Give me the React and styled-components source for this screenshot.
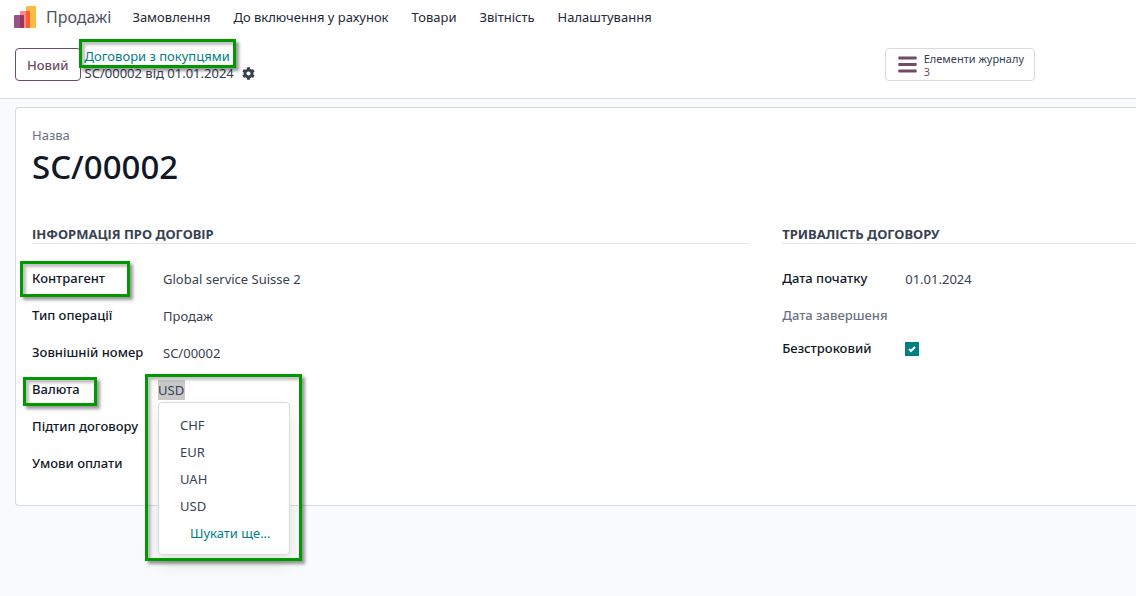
import React from 'react';
import styled, { createGlobalStyle } from 'styled-components';
import { FaBars, FaCog } from 'react-icons/fa';

const GlobalStyle = createGlobalStyle`
*{
box-sizing:border-box;
}
body{
margin:0;
background:#f9fafb;
color:#374151;
font-family:"Noto Sans", "Open Sans", sans-serif;
font-size:13px;
line-height:20px;
}
button, input{
font:inherit;
color:inherit;
}
`;

const Page = styled.div`
min-height:100vh;
overflow-x:hidden;
`;

const NavBar = styled.nav`
display:flex;
align-items:center;
height:34px;
padding-left:14px;
background:#fff;
`;

const AppName = styled.a`
display:flex;
align-items:center;
gap:10px;
margin-right:21px;
color:#4b5563;
font-size:16px;
text-decoration:none;
`;

const Menu = styled.div`
display:flex;
gap:23px;
`;

const MenuLink = styled.a`
color:#1f2937;
text-decoration:none;
white-space:nowrap;
`;

const ControlPanel = styled.header`
display:flex;
align-items:center;
justify-content:space-between;
height:65px;
padding:0 101px 3px 15px;
background:#fff;
border-bottom:1px solid #d8dadd;
`;

const PanelLeft = styled.div`
display:flex;
align-items:center;
gap:4px;
`;

const NewButton = styled.button`
height:33px;
padding:0 11px;
background:#fff;
border:1px solid #714b67;
border-radius:4px;
color:#714b67;
font-size:13px;
font-weight:500;
`;

const Breadcrumbs = styled.div`
display:flex;
flex-direction:column;
align-items:flex-start;
line-height:17px;
`;

const CrumbLink = styled.a`
position:relative;
color:#017e84;
text-decoration:none;
`;

const CurrentCrumb = styled.div`
display:flex;
align-items:center;
gap:8px;
`;

const IconButton = styled.button`
display:flex;
padding:0;
border:0;
background:none;
`;

const StatButton = styled.button`
display:flex;
align-items:center;
gap:6px;
height:33px;
padding:0 10px 0 11px;
background:#fff;
border:1px solid #d8dadd;
border-radius:4px;
font-size:11px;
line-height:13px;
text-align:left;
`;

const StatValue = styled.div`
color:#714b67;
`;

const Sheet = styled.main`
margin:8px 0 0 15px;
padding:17px 0 23px 16px;
background:#fff;
border:1px solid #d8dadd;
border-right:0;
border-radius:4px 0 0 4px;
`;

const NameLabel = styled.div`
color:#6b7280;
`;

const RecordName = styled.h1`
margin:0;
color:#111827;
font-size:33px;
font-weight:500;
line-height:44px;
`;

const Groups = styled.div`
display:grid;
grid-template-columns:67fr 33fr;
gap:32px;
margin-top:37px;
`;

const GroupTitle = styled.h2`
margin:0 0 16px;
border-bottom:1px solid #e5e7eb;
color:#374151;
font-size:13px;
font-weight:700;
line-height:17px;
text-transform:uppercase;
`;

const Field = styled.div`
display:grid;
grid-template-columns:${props => props.$labelWidth} 1fr;
align-items:center;
min-height:${props => (props.$compact ? '29px' : '37px')};
`;

const FieldLabel = styled.label`
position:relative;
justify-self:start;
padding-bottom:2px;
color:${props => (props.$muted ? '#6b7280' : '#111827')};
font-weight:500;
white-space:nowrap;
`;

const Many2One = styled.div`
position:relative;
margin-left:-5px;
`;

const CurrencyInput = styled.input`
display:block;
width:27px;
height:20px;
padding:0;
border:0;
outline:0;
background:#c8c8c8;
`;

const Dropdown = styled.ul`
position:absolute;
top:22px;
left:0;
width:132px;
margin:0;
padding:9px 0 7px;
list-style:none;
background:#fff;
border:1px solid #d8dadd;
border-radius:4px;
box-shadow:0 8px 16px rgb(0, 0, 0, 0.1);
`;

const Option = styled.li`
padding:0 21px;
line-height:27px;
`;

const MoreLink = styled.a`
padding-left:10px;
color:#017e84;
text-decoration:none;
white-space:nowrap;
`;

const Checkbox = styled.input`
display:block;
appearance:none;
width:14px;
height:14px;
margin:0;
background:#017e84 url("data:image/svg+xml,%3Csvg xmlns='http://www.w3.org/2000/svg' viewBox='0 0 14 14'%3E%3Cpath d='M4 7l2 2 4-4' fill='none' stroke='white' stroke-width='2'/%3E%3C/svg%3E");
`;

// green frame drawn over a part of the form
const Highlight = styled.span`
position:absolute;
inset:${props => props.$inset};
border:3px solid #009a00;
box-shadow:3px 3px 3px rgb(0, 0, 0, 0.4), inset 3px 3px 3px rgb(0, 0, 0, 0.25);
pointer-events:none;
`;

const menuItems = ['Замовлення', 'До включення у рахунок', 'Товари', 'Звітність', 'Налаштування'];
const currencies = ['CHF', 'EUR', 'UAH', 'USD'];

function SalesLogo() {
    return (
        <svg width="22" height="22" viewBox="0 0 22 22" aria-hidden="true">
            <rect x="12" width="10" height="22" rx="1" fill="#fbb945"/>
            <rect x="6" y="5" width="10" height="17" rx="1" fill="#fc868b"/>
            <rect y="9" width="10" height="13" rx="1" fill="#985184"/>
            <path d="M12 5h3a1 1 0 0 1 1 1v15a1 1 0 0 1-1 1h-3z" fill="#f86126"/>
            <path d="M6 9h3a1 1 0 0 1 1 1v11a1 1 0 0 1-1 1H6z" fill="#953653"/>
        </svg>
    );
}

function App() {
    return (
        <Page>
            <GlobalStyle/>
            <NavBar>
                <AppName href="#">
                    <SalesLogo/>
                    Продажі
                </AppName>
                <Menu>
                    {menuItems.map(item => <MenuLink href="#" key={item}>{item}</MenuLink>)}
                </Menu>
            </NavBar>
            <ControlPanel>
                <PanelLeft>
                    <NewButton>Новий</NewButton>
                    <Breadcrumbs>
                        <CrumbLink href="#">
                            Договори з покупцями
                            <Highlight $inset="-9px -6px -3px -6px"/>
                        </CrumbLink>
                        <CurrentCrumb>
                            SC/00002 від 01.01.2024
                            <IconButton aria-label="Дії"><FaCog size={13}/></IconButton>
                        </CurrentCrumb>
                    </Breadcrumbs>
                </PanelLeft>
                <StatButton>
                    <FaBars size={21} color="#714b67"/>
                    <div>
                        Елементи журналу
                        <StatValue>3</StatValue>
                    </div>
                </StatButton>
            </ControlPanel>
            <Sheet>
                <NameLabel>Назва</NameLabel>
                <RecordName>SC/00002</RecordName>
                <Groups>
                    <section>
                        <GroupTitle>Інформація про договір</GroupTitle>
                        <Field $labelWidth="131px">
                            <FieldLabel as="span">
                                Контрагент
                                <Highlight $inset="-7px -25px -7px -12px"/>
                            </FieldLabel>
                            <span>Global service Suisse 2</span>
                        </Field>
                        <Field $labelWidth="131px">
                            <FieldLabel as="span">Тип операції</FieldLabel>
                            <span>Продаж</span>
                        </Field>
                        <Field $labelWidth="131px">
                            <FieldLabel as="span">Зовнішній номер</FieldLabel>
                            <span>SC/00002</span>
                        </Field>
                        <Field $labelWidth="131px">
                            <FieldLabel htmlFor="currency">
                                Валюта
                                <Highlight $inset="-2px -17px -5px -9px"/>
                            </FieldLabel>
                            <Many2One>
                                <CurrencyInput id="currency" type="text" defaultValue="USD"/>
                                <Dropdown>
                                    {currencies.map(code => <Option key={code}>{code}</Option>)}
                                    <Option><MoreLink href="#">Шукати ще...</MoreLink></Option>
                                    <Highlight $inset="-29px -13px -7px -14px"/>
                                </Dropdown>
                            </Many2One>
                        </Field>
                        <Field $labelWidth="131px">
                            <FieldLabel as="span">Підтип договору</FieldLabel>
                        </Field>
                        <Field $labelWidth="131px">
                            <FieldLabel as="span">Умови оплати</FieldLabel>
                        </Field>
                    </section>
                    <section>
                        <GroupTitle>Тривалість договору</GroupTitle>
                        <Field $labelWidth="123px">
                            <FieldLabel as="span">Дата початку</FieldLabel>
                            <span>01.01.2024</span>
                        </Field>
                        <Field $labelWidth="123px">
                            <FieldLabel as="span" $muted>Дата завершеня</FieldLabel>
                        </Field>
                        <Field $labelWidth="123px" $compact>
                            <FieldLabel htmlFor="unlimited">Безстроковий</FieldLabel>
                            <Checkbox id="unlimited" type="checkbox" defaultChecked/>
                        </Field>
                    </section>
                </Groups>
            </Sheet>
        </Page>
    );
}

export default App;
